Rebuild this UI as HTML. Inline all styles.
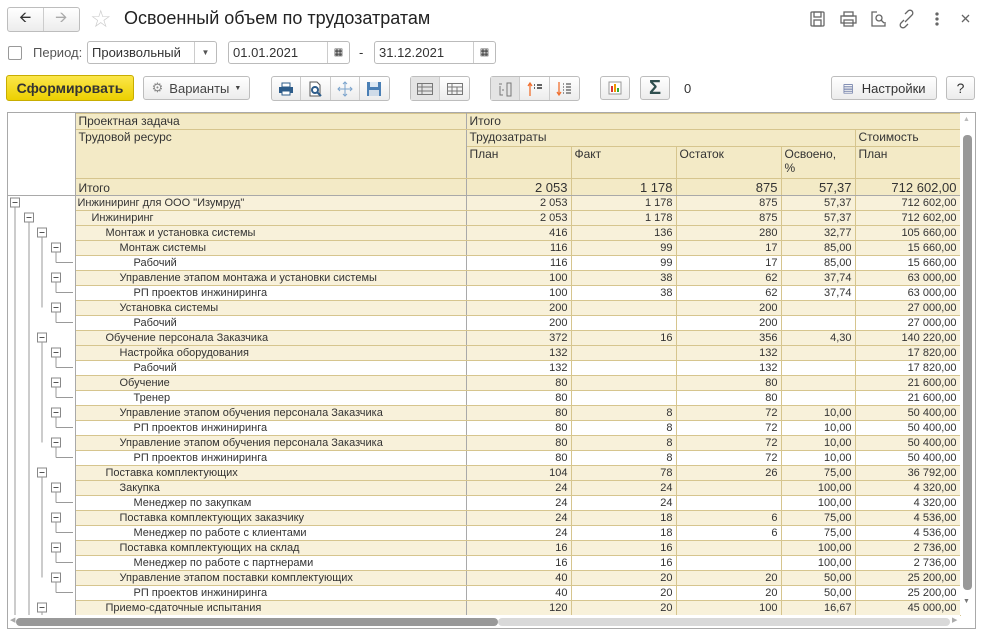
<!DOCTYPE html>
<html><head><meta charset="utf-8"><style>
*{box-sizing:border-box;margin:0;padding:0}
body{width:983px;height:637px;background:#fff;font-family:"Liberation Sans",Arial,sans-serif;color:#333;position:relative;overflow:hidden}
.a{position:absolute}
.btn{position:absolute;height:24px;border:1px solid #bdbdbd;border-radius:3px;background:linear-gradient(#fff,#ececec);font-size:13px;color:#333;display:flex;align-items:center;justify-content:center}
.grp{position:absolute;height:25px;border:1px solid #bdbdbd;border-radius:3px;background:linear-gradient(#fff,#ececec);display:flex}
.grp>div{width:30px;height:100%;border-right:1px solid #ccc;display:flex;align-items:center;justify-content:center}
.grp>div:last-child{border-right:none}
.grp>div.on{background:#e4e4e4}
.inp{position:absolute;height:23px;border:1px solid #bbb;border-radius:3px;background:#fff;font-size:13px;padding:3px 4px;color:#333}
table{position:absolute;left:8px;top:113px;border-collapse:collapse;table-layout:fixed;font-size:11px}
td{border:1px solid #d6c58e;height:15px;padding:0 3px;white-space:nowrap;overflow:hidden;line-height:13px}
tr.h td{background:#f3eac6;font-size:12px;vertical-align:top;padding-top:0;line-height:14px}
td.t{border:none;background:#fff!important;border-right:1px solid #a9a9a9}
td.x{border-right:1px solid #a9a9a9}
tr.g td{background:#f8f1da}
tr.w td{background:#fff}
td.n{text-align:right}
</style></head><body>
<div class="grp" style="left:7px;top:7px;width:73px;height:25px;border-radius:3px"><div style="width:36px;font-size:15px;color:#333">&#129128;</div><div style="width:36px;font-size:15px;color:#aaa">&#129130;</div></div>
<div class="a" style="left:90px;top:5px;font-size:24px;color:#ccc">☆</div>
<div class="a" style="left:124px;top:8px;font-size:18px;color:#222">Освоенный объем по трудозатратам</div>
<svg class="a" style="left:808px;top:8px" width="170" height="22" fill="none" stroke="#666" stroke-width="1.3">
<rect x="3" y="4" width="13" height="14" rx="1"/><rect x="6" y="4" width="7" height="5"/><rect x="6" y="12" width="7" height="6"/>
<rect x="33" y="8" width="15" height="7"/><rect x="36" y="4" width="9" height="4"/><rect x="36" y="12" width="9" height="6"/>
<path d="M69 4h-5v14h13v-4"/><circle cx="71" cy="10" r="3"/><path d="M73 12l3 3"/>
<path d="M96 12l-3 3a2.5 2.5 0 0 0 4 4l3-3M101 10l3-3a2.5 2.5 0 0 0-4-4l-3 3M97 14l5-5"/>
<circle cx="129" cy="6" r="1" fill="#666"/><circle cx="129" cy="11" r="1" fill="#666"/><circle cx="129" cy="16" r="1" fill="#666"/>
<path d="M154 7l7 7M161 7l-7 7"/>
</svg>
<div class="a" style="left:8px;top:46px;width:14px;height:14px;border:1px solid #999;border-radius:2px"></div>
<div class="a" style="left:33px;top:45px;font-size:13px;color:#555">Период:</div>
<div class="inp" style="left:87px;top:41px;width:130px">Произвольный<span class="a" style="right:0;top:0;width:22px;height:21px;border-left:1px solid #ccc;text-align:center;font-size:8px;line-height:21px;color:#555">▼</span></div>
<div class="inp" style="left:228px;top:41px;width:122px">01.01.2021<span class="a" style="right:0;top:0;width:22px;height:21px;border-left:1px solid #ccc;text-align:center;font-size:10px;line-height:21px">▦</span></div>
<div class="a" style="left:359px;top:45px;font-size:13px">-</div>
<div class="inp" style="left:374px;top:41px;width:122px">31.12.2021<span class="a" style="right:0;top:0;width:22px;height:21px;border-left:1px solid #ccc;text-align:center;font-size:10px;line-height:21px">▦</span></div>
<div class="btn" style="left:6px;top:75px;width:128px;height:26px;background:linear-gradient(#fbe64a,#ecd000);border-color:#c8ad00;font-weight:bold;font-size:14px;color:#333">Сформировать</div>
<div class="btn" style="left:143px;top:76px;width:107px;color:#444"><span style="color:#888;margin-right:6px">⚙</span>Варианты <span style="font-size:7px;margin-left:5px">▼</span></div>
<div class="grp" style="left:271px;top:76px;width:119px">
<div><svg width="16" height="14"><rect x="1" y="5" width="14" height="6" fill="#2d5c8a"/><rect x="4" y="1" width="8" height="4" fill="#fff" stroke="#2d5c8a"/><rect x="4" y="9" width="8" height="4" fill="#fff" stroke="#2d5c8a"/></svg></div>
<div><svg width="16" height="16"><path d="M3 1h7l3 3v11H3z" fill="#fff" stroke="#555"/><circle cx="8" cy="9" r="3" fill="none" stroke="#2d5c8a" stroke-width="2"/><path d="M10 11l4 4" stroke="#2d5c8a" stroke-width="2"/></svg></div>
<div><svg width="16" height="16" stroke="#7aa3cc" fill="none"><path d="M8 1v14M1 8h14M6 3l2-2 2 2M6 13l2 2 2-2M3 6l-2 2 2 2M13 6l2 2-2 2"/></svg></div>
<div><svg width="16" height="16"><rect x="1" y="1" width="14" height="14" fill="#4a7fb5"/><rect x="4" y="1" width="8" height="5" fill="#dde8f3"/><rect x="3" y="9" width="10" height="6" fill="#cfdbe8"/></svg></div>
</div>
<div class="grp" style="left:410px;top:76px;width:60px">
<div class="on"><svg width="16" height="12" stroke="#777" fill="none"><rect x=".5" y=".5" width="15" height="11"/><path d="M1 4h15M1 8h15M5 1v11"/></svg></div>
<div><svg width="16" height="12" stroke="#777" fill="none"><rect x=".5" y=".5" width="15" height="11"/><path d="M1 4h15M1 8h15M5 1v11M10 4v8"/></svg></div>
</div>
<div class="grp" style="left:490px;top:76px;width:90px">
<div class="on"><svg width="16" height="16" stroke="#777" fill="none"><path d="M2 3h3M3 5v9h3M5 9h2"/><rect x="10" y="2" width="4" height="13"/></svg></div>
<div><svg width="16" height="16"><path d="M3 15V2M1 5l2-3 2 3" stroke="#f07030" fill="none" stroke-width="1.3"/><path d="M7 4h1M7 7h1M10 4h5M10 7h5" stroke="#333" stroke-width="1.5"/></svg></div>
<div><svg width="16" height="16"><path d="M3 1v13M1 11l2 3 2-3" stroke="#f07030" fill="none" stroke-width="1.3"/><path d="M7 3h1M7 6h1M7 9h1M7 12h1M10 3h5M10 6h5M10 9h5M10 12h5" stroke="#333"/></svg></div>
</div>
<div class="btn" style="left:600px;top:76px;width:30px"><svg width="14" height="14"><rect x="1" y="1" width="12" height="12" fill="#fff" stroke="#999"/><rect x="3" y="5" width="2" height="6" fill="#d33"/><rect x="6" y="3" width="2" height="8" fill="#e90"/><rect x="9" y="7" width="2" height="4" fill="#3a3"/></svg></div>
<div class="btn" style="left:640px;top:76px;width:30px;font-size:20px;font-weight:bold;color:#2f4f4f">Σ</div>
<div class="a" style="left:684px;top:81px;font-size:13px">0</div>
<div class="btn" style="left:831px;top:76px;width:106px"><span style="color:#6070a0;margin-right:8px;font-size:12px">▤</span>Настройки</div>
<div class="btn" style="left:946px;top:76px;width:29px;font-size:14px">?</div>
<div class="a" style="left:7px;top:112px;width:969px;height:517px;border:1px solid #a9a9a9"></div>
<table>
<colgroup><col style="width:67px"><col style="width:391px"><col style="width:105px"><col style="width:105px"><col style="width:105px"><col style="width:74px"><col style="width:105px"></colgroup>
<tr class="h" style="height:16px"><td class="t" rowspan="4" style="border-bottom:1px solid #a9a9a9"></td><td class="x">Проектная задача</td><td colspan="5">Итого</td></tr>
<tr class="h" style="height:17px"><td class="x" rowspan="2">Трудовой ресурс</td><td colspan="4">Трудозатраты</td><td>Стоимость</td></tr>
<tr class="h" style="height:32px"><td>План</td><td>Факт</td><td>Остаток</td><td>Освоено,<br>%</td><td>План</td></tr>
<tr class="h" style="height:17px"><td class="x" style="border-bottom:1px solid #a9a9a9;padding-top:2px">Итого</td><td class="n" style="font-size:13px;border-bottom:1px solid #a9a9a9;padding-top:2px">2 053</td><td class="n" style="font-size:13px;border-bottom:1px solid #a9a9a9;padding-top:2px">1 178</td><td class="n" style="font-size:13px;border-bottom:1px solid #a9a9a9;padding-top:2px">875</td><td class="n" style="font-size:13px;border-bottom:1px solid #a9a9a9;padding-top:2px">57,37</td><td class="n" style="font-size:13px;border-bottom:1px solid #a9a9a9;padding-top:2px">712 602,00</td></tr>
<tr class="g"><td class="t"></td><td class="x" style="padding-left:2px">Инжиниринг для ООО "Изумруд"</td><td class="n">2 053</td><td class="n">1 178</td><td class="n">875</td><td class="n">57,37</td><td class="n">712 602,00</td></tr>
<tr class="g"><td class="t"></td><td class="x" style="padding-left:16px">Инжиниринг</td><td class="n">2 053</td><td class="n">1 178</td><td class="n">875</td><td class="n">57,37</td><td class="n">712 602,00</td></tr>
<tr class="g"><td class="t"></td><td class="x" style="padding-left:30px">Монтаж и установка системы</td><td class="n">416</td><td class="n">136</td><td class="n">280</td><td class="n">32,77</td><td class="n">105 660,00</td></tr>
<tr class="g"><td class="t"></td><td class="x" style="padding-left:44px">Монтаж системы</td><td class="n">116</td><td class="n">99</td><td class="n">17</td><td class="n">85,00</td><td class="n">15 660,00</td></tr>
<tr class="w"><td class="t"></td><td class="x" style="padding-left:58px">Рабочий</td><td class="n">116</td><td class="n">99</td><td class="n">17</td><td class="n">85,00</td><td class="n">15 660,00</td></tr>
<tr class="g"><td class="t"></td><td class="x" style="padding-left:44px">Управление этапом монтажа и установки системы</td><td class="n">100</td><td class="n">38</td><td class="n">62</td><td class="n">37,74</td><td class="n">63 000,00</td></tr>
<tr class="w"><td class="t"></td><td class="x" style="padding-left:58px">РП проектов инжиниринга</td><td class="n">100</td><td class="n">38</td><td class="n">62</td><td class="n">37,74</td><td class="n">63 000,00</td></tr>
<tr class="g"><td class="t"></td><td class="x" style="padding-left:44px">Установка системы</td><td class="n">200</td><td class="n"></td><td class="n">200</td><td class="n"></td><td class="n">27 000,00</td></tr>
<tr class="w"><td class="t"></td><td class="x" style="padding-left:58px">Рабочий</td><td class="n">200</td><td class="n"></td><td class="n">200</td><td class="n"></td><td class="n">27 000,00</td></tr>
<tr class="g"><td class="t"></td><td class="x" style="padding-left:30px">Обучение персонала Заказчика</td><td class="n">372</td><td class="n">16</td><td class="n">356</td><td class="n">4,30</td><td class="n">140 220,00</td></tr>
<tr class="g"><td class="t"></td><td class="x" style="padding-left:44px">Настройка оборудования</td><td class="n">132</td><td class="n"></td><td class="n">132</td><td class="n"></td><td class="n">17 820,00</td></tr>
<tr class="w"><td class="t"></td><td class="x" style="padding-left:58px">Рабочий</td><td class="n">132</td><td class="n"></td><td class="n">132</td><td class="n"></td><td class="n">17 820,00</td></tr>
<tr class="g"><td class="t"></td><td class="x" style="padding-left:44px">Обучение</td><td class="n">80</td><td class="n"></td><td class="n">80</td><td class="n"></td><td class="n">21 600,00</td></tr>
<tr class="w"><td class="t"></td><td class="x" style="padding-left:58px">Тренер</td><td class="n">80</td><td class="n"></td><td class="n">80</td><td class="n"></td><td class="n">21 600,00</td></tr>
<tr class="g"><td class="t"></td><td class="x" style="padding-left:44px">Управление этапом обучения персонала Заказчика</td><td class="n">80</td><td class="n">8</td><td class="n">72</td><td class="n">10,00</td><td class="n">50 400,00</td></tr>
<tr class="w"><td class="t"></td><td class="x" style="padding-left:58px">РП проектов инжиниринга</td><td class="n">80</td><td class="n">8</td><td class="n">72</td><td class="n">10,00</td><td class="n">50 400,00</td></tr>
<tr class="g"><td class="t"></td><td class="x" style="padding-left:44px">Управление этапом обучения персонала Заказчика</td><td class="n">80</td><td class="n">8</td><td class="n">72</td><td class="n">10,00</td><td class="n">50 400,00</td></tr>
<tr class="w"><td class="t"></td><td class="x" style="padding-left:58px">РП проектов инжиниринга</td><td class="n">80</td><td class="n">8</td><td class="n">72</td><td class="n">10,00</td><td class="n">50 400,00</td></tr>
<tr class="g"><td class="t"></td><td class="x" style="padding-left:30px">Поставка комплектующих</td><td class="n">104</td><td class="n">78</td><td class="n">26</td><td class="n">75,00</td><td class="n">36 792,00</td></tr>
<tr class="g"><td class="t"></td><td class="x" style="padding-left:44px">Закупка</td><td class="n">24</td><td class="n">24</td><td class="n"></td><td class="n">100,00</td><td class="n">4 320,00</td></tr>
<tr class="w"><td class="t"></td><td class="x" style="padding-left:58px">Менеджер по закупкам</td><td class="n">24</td><td class="n">24</td><td class="n"></td><td class="n">100,00</td><td class="n">4 320,00</td></tr>
<tr class="g"><td class="t"></td><td class="x" style="padding-left:44px">Поставка комплектующих заказчику</td><td class="n">24</td><td class="n">18</td><td class="n">6</td><td class="n">75,00</td><td class="n">4 536,00</td></tr>
<tr class="w"><td class="t"></td><td class="x" style="padding-left:58px">Менеджер по работе с клиентами</td><td class="n">24</td><td class="n">18</td><td class="n">6</td><td class="n">75,00</td><td class="n">4 536,00</td></tr>
<tr class="g"><td class="t"></td><td class="x" style="padding-left:44px">Поставка комплектующих на склад</td><td class="n">16</td><td class="n">16</td><td class="n"></td><td class="n">100,00</td><td class="n">2 736,00</td></tr>
<tr class="w"><td class="t"></td><td class="x" style="padding-left:58px">Менеджер по работе с партнерами</td><td class="n">16</td><td class="n">16</td><td class="n"></td><td class="n">100,00</td><td class="n">2 736,00</td></tr>
<tr class="g"><td class="t"></td><td class="x" style="padding-left:44px">Управление этапом поставки комплектующих</td><td class="n">40</td><td class="n">20</td><td class="n">20</td><td class="n">50,00</td><td class="n">25 200,00</td></tr>
<tr class="w"><td class="t"></td><td class="x" style="padding-left:58px">РП проектов инжиниринга</td><td class="n">40</td><td class="n">20</td><td class="n">20</td><td class="n">50,00</td><td class="n">25 200,00</td></tr>
<tr class="g"><td class="t"></td><td class="x" style="padding-left:30px">Приемо-сдаточные испытания</td><td class="n">120</td><td class="n">20</td><td class="n">100</td><td class="n">16,67</td><td class="n">45 000,00</td></tr>
</table>
<svg id="tree" class="a" style="left:0;top:0" width="80" height="637"></svg>
<div class="a" style="left:8px;top:615px;width:952px;height:13px;background:#fff"></div>
<div class="a" style="left:16px;top:618px;width:482px;height:8px;border-radius:4px;background:#999"></div>
<div class="a" style="left:498px;top:618px;width:452px;height:8px;border-radius:4px;background:#d9d9d9"></div>
<div class="a" style="left:10px;top:616px;font-size:7px;color:#aaa">◀</div>
<div class="a" style="left:952px;top:616px;font-size:7px;color:#aaa">▶</div>
<div class="a" style="left:960px;top:113px;width:15px;height:502px;background:#fff"></div>
<div class="a" style="left:963px;top:135px;width:9px;height:455px;border-radius:4px;background:#999"></div>
<div class="a" style="left:963px;top:116px;font-size:7px;color:#bbb">▲</div>
<div class="a" style="left:963px;top:598px;font-size:7px;color:#777">▼</div>
<script>
var s=document.getElementById('tree'),h='';
var lv=[0,1,2,3,4,3,4,3,4,2,3,4,3,4,3,4,3,4,2,3,4,3,4,3,4,3,4,2];
var bx=[15,29,42,56];
function my(i){return 202.5+15*i}
for(var i=0;i<lv.length;i++){var L=lv[i];
 if(L<4){h+='<rect x="'+(bx[L]-4.5)+'" y="'+(my(i)-4.5)+'" width="9" height="9" fill="#fff" stroke="#888"/><path d="M'+(bx[L]-2.5)+' '+my(i)+'h5" stroke="#555"/>';
  var last=i;for(var j=i+1;j<lv.length&&lv[j]>L;j++){if(lv[j]==L+1)last=j;}
  var end=my(last);
  if(L<=2&&j>=lv.length)end=615;
  h+='<path d="M'+bx[L]+' '+(my(i)+4.5)+'V'+end+'" stroke="#999" fill="none"/>';
 } else {h+='<path d="M56 '+my(i)+'H73" stroke="#999"/>';}
}
s.innerHTML=h;
</script>
</body></html>
